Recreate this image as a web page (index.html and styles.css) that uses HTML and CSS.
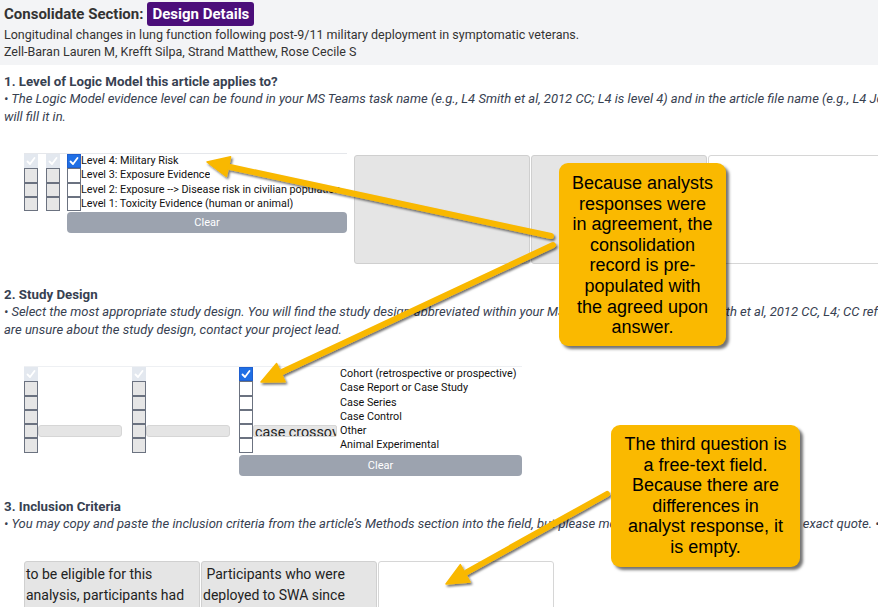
FILE: index.html
```html
<!DOCTYPE html>
<html lang="en">
<head>
<meta charset="utf-8">
<title>Consolidate Section: Design Details</title>
<link rel="stylesheet" href="styles.css">
</head>
<body>
<div class="page">
  <header class="topbar">
    <div class="title-row"><span class="title">Consolidate Section:</span><span class="badge">Design Details</span></div>
    <div class="meta">Longitudinal changes in lung function following post-9/11 military deployment in symptomatic veterans.</div>
    <div class="meta">Zell-Baran Lauren M, Krefft Silpa, Strand Matthew, Rose Cecile S</div>
  </header>

  <section class="q q1">
    <h2 class="q-title">1. Level of Logic Model this article applies to?</h2>
    <p class="hint">• The Logic Model evidence level can be found in your MS Teams task name (e.g., L4 Smith et al, 2012 CC; L4 is level 4) and in the article file name (e.g., L4 Jones et al, 2012 CC.pdf). If it is missing, the consolidator<br>will fill it in.</p>
    <div class="resp-row">
      <div class="choices lvl">
        <div class="acol">
          <span class="cb dis"><svg viewBox="0 0 14 14"><polyline points="3.5,7.5 6,10 10.5,4"/></svg></span>
          <span class="cb an"></span>
          <span class="cb an"></span>
          <span class="cb an"></span>
        </div>
        <div class="acol">
          <span class="cb dis"><svg viewBox="0 0 14 14"><polyline points="3.5,7.5 6,10 10.5,4"/></svg></span>
          <span class="cb an"></span>
          <span class="cb an"></span>
          <span class="cb an"></span>
        </div>
        <div class="ccol">
          <div class="opt"><span class="cb on"><svg viewBox="0 0 14 14"><polyline points="3.5,7.5 6,10 10.5,4"/></svg></span><span class="lbl">Level 4: Military Risk</span></div>
          <div class="opt"><span class="cb off"></span><span class="lbl">Level 3: Exposure Evidence</span></div>
          <div class="opt"><span class="cb off"></span><span class="lbl">Level 2: Exposure --&gt; Disease risk in civilian population</span></div>
          <div class="opt"><span class="cb off"></span><span class="lbl">Level 1: Toxicity Evidence (human or animal)</span></div>
          <div class="clear">Clear</div>
        </div>
      </div>
      <div class="notes">
        <div class="note gray"></div>
        <div class="note gray"></div>
        <div class="note white"></div>
      </div>
    </div>
  </section>

  <section class="q q2">
    <h2 class="q-title">2. Study Design</h2>
    <p class="hint">• Select the most appropriate study design. You will find the study design abbreviated within your MS Team tab name (e.g. L4 Smith et al, 2012 CC, L4; CC refers to case control). If you<br>are unsure about the study design, contact your project lead.</p>
    <div class="choices sd">
      <div class="scol">
        <div class="srow"><span class="cb dis"><svg viewBox="0 0 14 14"><polyline points="3.5,7.5 6,10 10.5,4"/></svg></span></div>
        <div class="srow"><span class="cb an"></span></div>
        <div class="srow"><span class="cb an"></span></div>
        <div class="srow"><span class="cb an"></span></div>
        <div class="srow"><span class="cb an"></span><span class="other"></span></div>
        <div class="srow"><span class="cb an"></span></div>
      </div>
      <div class="scol">
        <div class="srow"><span class="cb dis"><svg viewBox="0 0 14 14"><polyline points="3.5,7.5 6,10 10.5,4"/></svg></span></div>
        <div class="srow"><span class="cb an"></span></div>
        <div class="srow"><span class="cb an"></span></div>
        <div class="srow"><span class="cb an"></span></div>
        <div class="srow"><span class="cb an"></span><span class="other"></span></div>
        <div class="srow"><span class="cb an"></span></div>
      </div>
      <div class="scol cons">
        <div class="srow"><span class="cb on"><svg viewBox="0 0 14 14"><polyline points="3.5,7.5 6,10 10.5,4"/></svg></span><span class="slot"></span><span class="lbl">Cohort (retrospective or prospective)</span></div>
        <div class="srow"><span class="cb off"></span><span class="slot"></span><span class="lbl">Case Report or Case Study</span></div>
        <div class="srow"><span class="cb off"></span><span class="slot"></span><span class="lbl">Case Series</span></div>
        <div class="srow"><span class="cb off"></span><span class="slot"></span><span class="lbl">Case Control</span></div>
        <div class="srow"><span class="cb off"></span><span class="slot other filled">case crossover</span><span class="lbl">Other</span></div>
        <div class="srow"><span class="cb off"></span><span class="slot"></span><span class="lbl">Animal Experimental</span></div>
        <div class="clear">Clear</div>
      </div>
    </div>
  </section>

  <section class="q q3">
    <h2 class="q-title">3. Inclusion Criteria</h2>
    <p class="hint">• You may copy and paste the inclusion criteria from the article’s Methods section into the field, but please modify the words so that it is not an exact quote. • Include all criteria that apply.</p>
    <div class="texts">
      <div class="tbox gray">to be eligible for this analysis, participants had to have been deployed</div>
      <div class="tbox gray">&nbsp;Participants who were deployed to SWA since 2001</div>
      <div class="tbox white"></div>
    </div>
  </section>
</div>

<div class="overlay">
  <svg class="arrows" width="878" height="607" viewBox="0 0 878 607">
    <defs>
      <filter id="sh" x="-20%" y="-20%" width="140%" height="140%">
        <feDropShadow dx="1.5" dy="2" stdDeviation="1.2" flood-color="#000" flood-opacity="0.55"/>
      </filter>
    </defs>
    <g filter="url(#sh)" class="arrow">
      <line x1="551" y1="236" x2="230" y2="167"/>
      <polygon points="207,162 230.6,156.8 226.4,176.4"/>
    </g>
    <g filter="url(#sh)" class="arrow">
      <line x1="553" y1="245" x2="282" y2="372"/>
      <polygon points="261,382 276.6,363.6 285.1,381.7"/>
    </g>
    <g filter="url(#sh)" class="arrow">
      <line x1="607" y1="494" x2="467" y2="572"/>
      <polygon points="446,584 460.3,564.6 470.1,582"/>
    </g>
  </svg>
  <div class="callout c-one">Because analysts<br>responses were<br>in agreement, the<br>consolidation<br>record is pre-<br>populated with<br>the agreed upon<br>answer.</div>
  <div class="callout c-two">The third question is<br>a free-text field.<br>Because there are<br>differences in<br>analyst response, it<br>is empty.</div>
</div>
</body>
</html>
```

FILE: styles.css
```css
* { box-sizing: border-box; }
html, body { margin: 0; padding: 0; }
body {
  width: 878px;
  height: 607px;
  overflow: hidden;
  position: relative;
  background: #fff;
  font-family: Roboto, "Liberation Sans", Arial, sans-serif;
  color: #333;
}
.page { width: 1300px; }

/* header */
.topbar {
  background: #f3f4f6;
  height: 65px;
  padding: 2px 4px 0;
}
.title-row { display: flex; align-items: center; gap: 4px; height: 24px; }
.title { font-weight: 700; font-size: 15px; color: #333; }
.badge {
  background: #4b0e7a;
  color: #fff;
  font-weight: 700;
  font-size: 15px;
  line-height: 20px;
  padding: 2px 5px;
  border-radius: 3px;
}
.meta { font-size: 12.5px; line-height: 17px; color: #333; }

/* questions */
.q { padding-left: 4px; }
.q1 { margin-top: 8px; }
.q2, .q3 { margin-top: 22px; }
.q-title {
  margin: 0;
  font-size: 13.3px;
  line-height: 17px;
  font-weight: 700;
  color: #374151;
}
.hint {
  margin: 0;
  font-size: 13px;
  line-height: 17.5px;
  font-style: italic;
  color: #374151;
  white-space: nowrap;
}

/* checkboxes */
.cb {
  display: block;
  width: 14px;
  height: 14.3px;
  flex: none;
}
.cb svg { display: block; width: 14px; height: 14px; }
.cb polyline { fill: none; stroke: #fff; stroke-width: 1.8; stroke-linecap: round; stroke-linejoin: round; }
.cb.dis { background: #e3e8ef; }
.cb.an { background: #e6e6e6; border: 1px solid #6b7280; }
.cb.on { background: #1f6fe5; border: 1px solid #1f5fcf; }
.cb.on svg { margin: -1px; }
.cb.off { background: #fff; border: 1px solid #6b7280; }

.lbl {
  font-size: 10.8px;
  line-height: 14.3px;
  color: #111;
  white-space: nowrap;
}

.clear {
  height: 21px;
  margin-top: 1px;
  background: #9ca3af;
  color: #fff;
  border-radius: 4px;
  font-size: 11px;
  line-height: 21px;
  text-align: center;
}

/* section 1 */
.resp-row { display: flex; margin-left: 20px; margin-top: 28px; }
.choices.lvl {
  display: flex;
  width: 323px;
  border-top: 1px solid #e5e7eb;
}
.lvl .acol { width: 14px; margin-right: 8px; }
.lvl .acol + .acol { margin-right: 7px; }
.lvl .ccol { width: 280px; overflow: hidden; }
.opt { display: flex; height: 14.3px; }
.opt .lbl { overflow: hidden; }

.notes { display: flex; gap: 1px; margin-left: 7px; margin-top: 2px; }
.note { width: 176px; height: 109px; border-radius: 3px; }
.note.gray { background: #e5e5e5; border: 1px solid #cfcfcf; }
.note.white { background: #fff; border: 1px solid #d6d6d6; }

/* section 2 */
.choices.sd {
  display: flex;
  margin-left: 20px;
  margin-top: 28px;
  width: 498px;
  border-top: 1px solid #eef0f3;
}
.scol { width: 107.5px; }
.scol.cons { width: 283px; }
.srow { display: flex; align-items: flex-start; height: 14.3px; }
.other {
  display: block;
  width: 84px;
  height: 12px;
  margin-top: 1px;
  background: #e5e5e5;
  border: 1px solid #d6d6d6;
  border-radius: 3px;
}
.slot { display: block; width: 86px; flex: none; }
.slot.other.filled {
  width: 84px;
  margin-right: 2px;
  overflow: hidden;
  white-space: nowrap;
  font-size: 14.3px;
  line-height: 12px;
  color: #222;
  padding-left: 1px;
  border-radius: 2px;
}
.cons .lbl { padding-left: 1px; }
.cons .clear { margin-top: 2px; }

/* section 3 */
.texts { display: flex; gap: 1px; margin-left: 20px; margin-top: 29px; }
.tbox {
  width: 176px;
  height: 80px;
  padding: 2px 2px 0 1px;
  font-size: 14px;
  line-height: 21px;
  color: #222;
  border-radius: 3px;
  overflow: hidden;
}
.tbox.gray { background: #e5e5e5; border: 1px solid #d0d0d0; }
.tbox.white { background: #fff; border: 1px solid #d6d6d6; }

/* overlay annotations */
.overlay { position: absolute; left: 0; top: 0; width: 878px; height: 607px; pointer-events: none; }
.arrows { position: absolute; left: 0; top: 0; }
.arrow line { stroke: #f9b800; stroke-width: 6; stroke-linecap: round; }
.arrow polygon { fill: #f9b800; stroke: #f9b800; stroke-width: 1.5; stroke-linejoin: round; }
.callout {
  position: absolute;
  background: #fab900;
  color: #000;
  border-radius: 9px;
  box-shadow: 3px 3px 3px rgba(0, 0, 0, 0.55);
  font-family: "Liberation Sans", Arial, sans-serif;
  font-size: 18px;
  line-height: 20.6px;
  text-align: center;
}
.c-one { left: 559px; top: 163px; width: 167px; height: 183px; padding-top: 10px; }
.c-two { left: 611px; top: 425px; width: 189px; height: 142px; padding-top: 9px; }
```
